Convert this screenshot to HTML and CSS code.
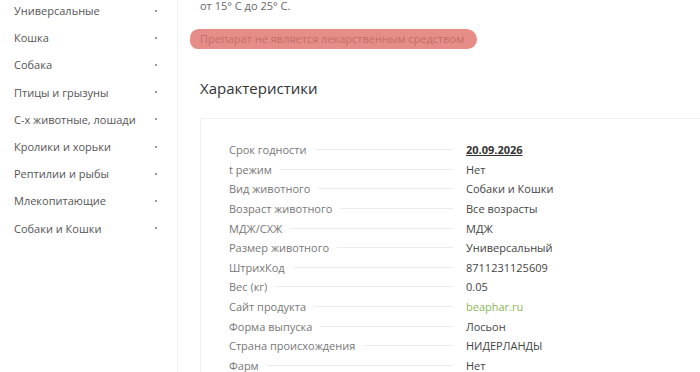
FILE: index.html
```html
<!DOCTYPE html>
<html>

<head>
    <title>Характеристики</title>
    <link rel="stylesheet" href="styles.css">
</head>

<body>
    <div class="page">
        <div class="sidebar">
            <ul class="cats">
                <li><span>Универсальные</span><i></i></li>
                <li><span>Кошка</span><i></i></li>
                <li><span>Собака</span><i></i></li>
                <li><span>Птицы и грызуны</span><i></i></li>
                <li><span>С-х животные, лошади</span><i></i></li>
                <li><span>Кролики и хорьки</span><i></i></li>
                <li><span>Рептилии и рыбы</span><i></i></li>
                <li><span>Млекопитающие</span><i></i></li>
                <li><span>Собаки и Кошки</span><i></i></li>
            </ul>
        </div>
        <div class="content">
            <p class="storage">от 15° С до 25° С.</p>
            <div class="warning">Препарат не является лекарственным средством</div>
            <h2>Характеристики</h2>
            <div class="props">
                <div class="row"><span class="name">Срок годности</span><span class="value date">20.09.2026</span></div>
                <div class="row"><span class="name">t режим</span><span class="value">Нет</span></div>
                <div class="row"><span class="name">Вид животного</span><span class="value">Собаки и Кошки</span></div>
                <div class="row"><span class="name">Возраст животного</span><span class="value">Все возрасты</span></div>
                <div class="row"><span class="name">МДЖ/СХЖ</span><span class="value">МДЖ</span></div>
                <div class="row"><span class="name">Размер животного</span><span class="value">Универсальный</span></div>
                <div class="row"><span class="name">ШтрихКод</span><span class="value">8711231125609</span></div>
                <div class="row"><span class="name">Вес (кг)</span><span class="value">0.05</span></div>
                <div class="row"><span class="name">Сайт продукта</span><span class="value link">beaphar.ru</span></div>
                <div class="row"><span class="name">Форма выпуска</span><span class="value">Лосьон</span></div>
                <div class="row"><span class="name">Страна происхождения</span><span class="value">НИДЕРЛАНДЫ</span></div>
                <div class="row"><span class="name">Фарм</span><span class="value">Нет</span></div>
            </div>
        </div>
    </div>
</body>

</html>
```

FILE: styles.css
```css
body {
    margin: 0;
    background-color: #fff;
    font-family: "Open Sans", "DejaVu Sans", sans-serif;
    font-size: 11px;
    color: #555;
    overflow: hidden;
}

.page {
    display: flex;
    height: 372px;
    overflow: hidden;
}

.sidebar {
    width: 177px;
    flex-shrink: 0;
    border-right: 1px solid #f0f0f0;
}

.cats {
    list-style: none;
    margin: -3px 0 0;
    padding: 0 0 0 14px;
}

.cats li {
    height: 27.2px;
    display: flex;
    align-items: center;
    justify-content: space-between;
    padding-right: 20px;
    color: #555;
}

.cats li i {
    width: 2px;
    height: 2px;
    border-radius: 50%;
    background-color: #777;
}

.content {
    flex: 1;
    padding-left: 22px;
    min-width: 0;
    overflow: hidden;
}

.storage {
    margin: 0;
    line-height: 11px;
    color: #666;
}

.warning {
    display: inline-block;
    margin: 18px 0 0 -10px;
    padding: 0 13px 0 10px;
    height: 20px;
    line-height: 20px;
    border-radius: 10px 12px 11px 9px;
    background-color: #e68d87;
    color: #c26e6b;
}

h2 {
    margin: 29px 0 0;
    font-size: 15px;
    line-height: 20px;
    font-weight: 400;
    color: #333;
}

.props {
    margin-top: 20px;
    margin-right: -40px;
    border: 1px solid #efefef;
    padding: 21px 0 0 28px;
    height: 300px;
}

.row {
    display: flex;
    align-items: center;
    height: 19.6px;
}

.name {
    width: 237px;
    flex-shrink: 0;
    display: flex;
    align-items: center;
    color: #777;
}

.name::after {
    content: "";
    flex: 1;
    border-top: 1px solid #ececec;
    margin: 0 13px 0 8px;
}

.value {
    color: #444;
}

.date {
    font-weight: 700;
    text-decoration: underline;
    color: #333;
}

.link {
    color: #8ab85a;
}
```
